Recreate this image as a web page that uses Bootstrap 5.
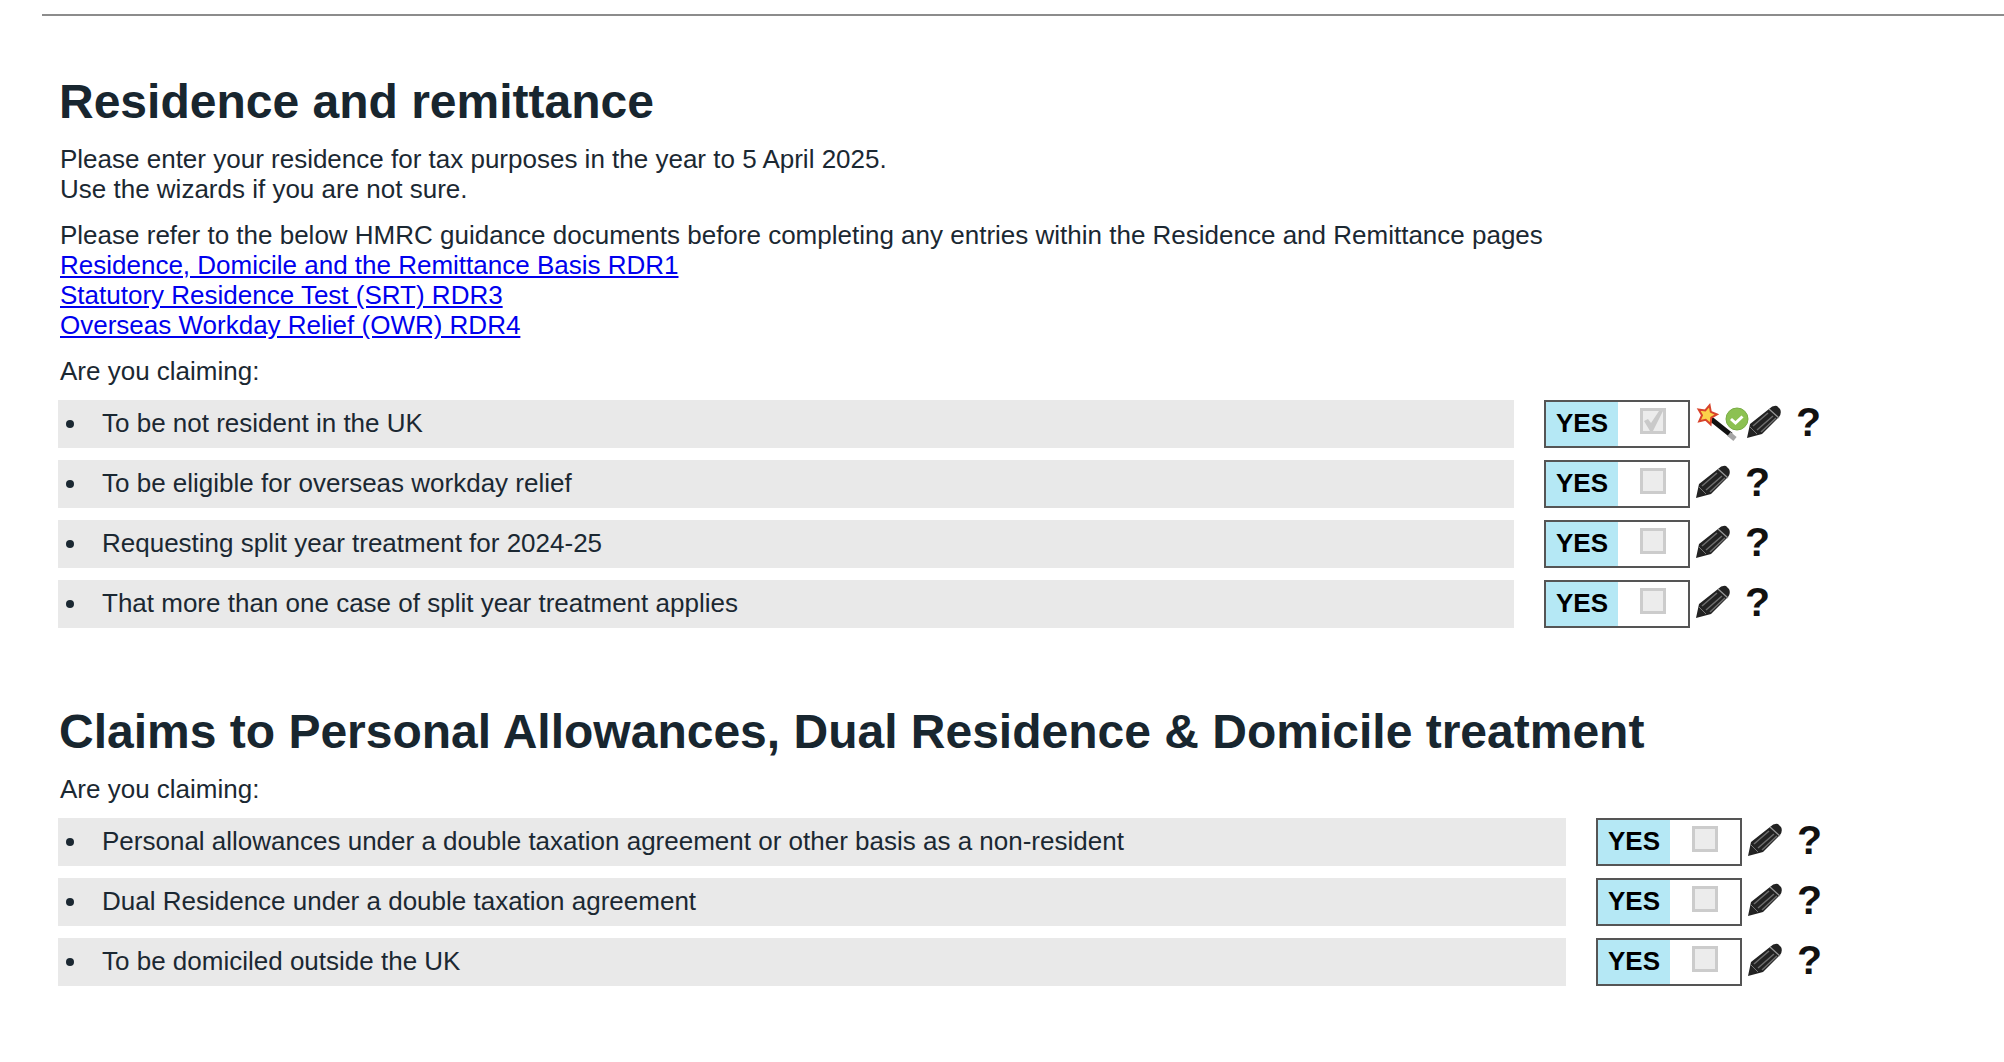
<!DOCTYPE html>
<html lang="en">
<head>
  <meta charset="UTF-8" />
  <meta name="viewport" content="width=device-width, initial-scale=1.0"/>
  <title>Residence and remittance</title>
  <link href="https://cdn.jsdelivr.net/npm/bootstrap@5.3.0/dist/css/bootstrap.min.css" rel="stylesheet" />
  <style>
    body { font-family: "Liberation Sans", Arial, sans-serif; font-size: 26px; line-height: 30px; color: #1b2832; background: #fff; }
    .page-wrap { padding: 14px 0 0 42px; }
    .top-rule { height: 2px; background: #8c8c8c; margin-bottom: 60px; }
    .page-body { padding-left: 18px; }
    .page-title { font-size: 48px; line-height: 52px; font-weight: 700; margin: 0 0 16px -1px; color: #18262f; }
    .intro { margin: 0 0 16px; }
    .intro a { color: #0000ee; }
    .intro-last { margin-bottom: 14px; }
    .claim-list { list-style: none; margin: 0 0 0 -2px; padding: 0; display: flex; flex-direction: column; gap: 12px; }
    .claim-row { display: flex; align-items: stretch; }
    .claim-bar { background: #e9e9e9; height: 48px; padding-bottom: 2px; display: flex; align-items: center; flex: none; }
    .claim-bar::before { content: ""; width: 8px; height: 8px; border-radius: 50%; background: #1b2832; margin: 2px 28px 0 8px; }
    .bar-short { width: 1456px; margin-right: 30px; }
    .bar-long { width: 1508px; margin-right: 30px; }
    .yes-box { width: 146px; height: 48px; border: 2px solid #555; display: flex; flex: none; background: #fff; }
    .yes-label { width: 72px; background: #b5e8f5; font-weight: 700; color: #000; text-align: center; line-height: 43px; }
    .yes-check { flex: 1; display: flex; align-items: center; justify-content: center; padding-bottom: 6px; }
    .yes-check input { appearance: none; width: 26px; height: 26px; margin: 0; border: 3px solid #ccc; background: #ececec center/cover no-repeat; }
    .yes-check input:checked { background-image: url("data:image/svg+xml,%3Csvg xmlns='http://www.w3.org/2000/svg' viewBox='0 0 20 20'%3E%3Cpath d='M1 10l4-2 3 4L16 0h4L10 20H7z' fill='%23c9c9c9'/%3E%3C/svg%3E"); }
    .row-icons { display: flex; align-items: flex-start; padding: 5px 0 0 6px; flex: none; }
    .icon-wand { width: 51px; height: 36px; display: block; overflow: visible; }
    .icon-pencil { width: 52px; height: 36px; display: block; }
    .icon-help { width: 25px; margin-left: -3px; font-weight: 700; font-size: 41px; line-height: 34px; color: #111; text-align: center; }
    .group-gap { margin-top: 78px; }
  </style>
</head>
<body>
  <div class="page-wrap">
    <div class="top-rule"></div>
    <div class="page-body">
      <h2 class="page-title">Residence and remittance</h2>
      <p class="intro">Please enter your residence for tax purposes in the year to 5 April 2025.<br>Use the wizards if you are not sure.</p>
      <p class="intro">Please refer to the below HMRC guidance documents before completing any entries within the Residence and Remittance pages<br>
        <a href="#">Residence, Domicile and the Remittance Basis RDR1</a><br>
        <a href="#">Statutory Residence Test (SRT) RDR3</a><br>
        <a href="#">Overseas Workday Relief (OWR) RDR4</a></p>
      <p class="intro intro-last">Are you claiming:</p>
      <ul class="claim-list" id="residenceList"></ul>

      <h2 class="page-title group-gap">Claims to Personal Allowances, Dual Residence &amp; Domicile treatment</h2>
      <p class="intro intro-last">Are you claiming:</p>
      <ul class="claim-list" id="claimsList"></ul>
    </div>
  </div>

  <script>
    const pencil = `<svg class="icon-pencil" viewBox="0 0 52 36"><path d="M0 33L3 19 22 4Q26 0 30 1L33 4Q35 8 32 12L15 29z" fill="#222"/><path d="M6 21L21 8M10 25L26 11M14 27L29 13" stroke="#6e6e6e" stroke-width="1.500"/><path d="M22 4l10 9" stroke="#999" stroke-width="1.200"/><path d="M3 22l7 7" stroke="#777" stroke-width="1"/></svg>`;
    const wand = `<svg class="icon-wand" viewBox="0 0 51 36"><path d="M15 14l20 16" stroke="#111" stroke-width="5"/><path d="M33 29l6 5" stroke="#a5a5a5" stroke-width="5"/><path d="M11 0l2.900 6 6.600.9-4.700 4.600 1.100 6.600L11 15l-5.900 3.100 1.100-6.600L1.500 6.900 8.100 6z" transform="rotate(15 11 10)" fill="#fbd24a" stroke="#d8432b" stroke-width="2"/><circle cx="41" cy="14" r="11" fill="#8cc152" stroke="#79ad45" stroke-width="1"/><path d="M35 14l4.500 4 7-6.500" fill="none" stroke="#fff" stroke-width="3"/></svg>`;

    function addRows(listId, rows, barClass) {
      const list = document.getElementById(listId);
      rows.forEach((row) => {
        list.insertAdjacentHTML("beforeend", `
          <li class="claim-row">
            <div class="claim-bar ${barClass}">${row.text}</div>
            <div class="yes-box">
              <div class="yes-label">YES</div>
              <div class="yes-check"><input type="checkbox" disabled ${row.checked ? "checked" : ""}></div>
            </div>
            <div class="row-icons">${row.wizard ? wand : ""}${pencil}<div class="icon-help">?</div></div>
          </li>`);
      });
    }

    addRows("residenceList", [
      { text: "To be not resident in the UK", checked: true, wizard: true },
      { text: "To be eligible for overseas workday relief" },
      { text: "Requesting split year treatment for 2024-25" },
      { text: "That more than one case of split year treatment applies" }
    ], "bar-short");

    addRows("claimsList", [
      { text: "Personal allowances under a double taxation agreement or other basis as a non-resident" },
      { text: "Dual Residence under a double taxation agreement" },
      { text: "To be domiciled outside the UK" }
    ], "bar-long");
  </script>
  <script src="https://cdn.jsdelivr.net/npm/bootstrap@5.3.0/dist/js/bootstrap.bundle.min.js"></script>
</body>
</html>
